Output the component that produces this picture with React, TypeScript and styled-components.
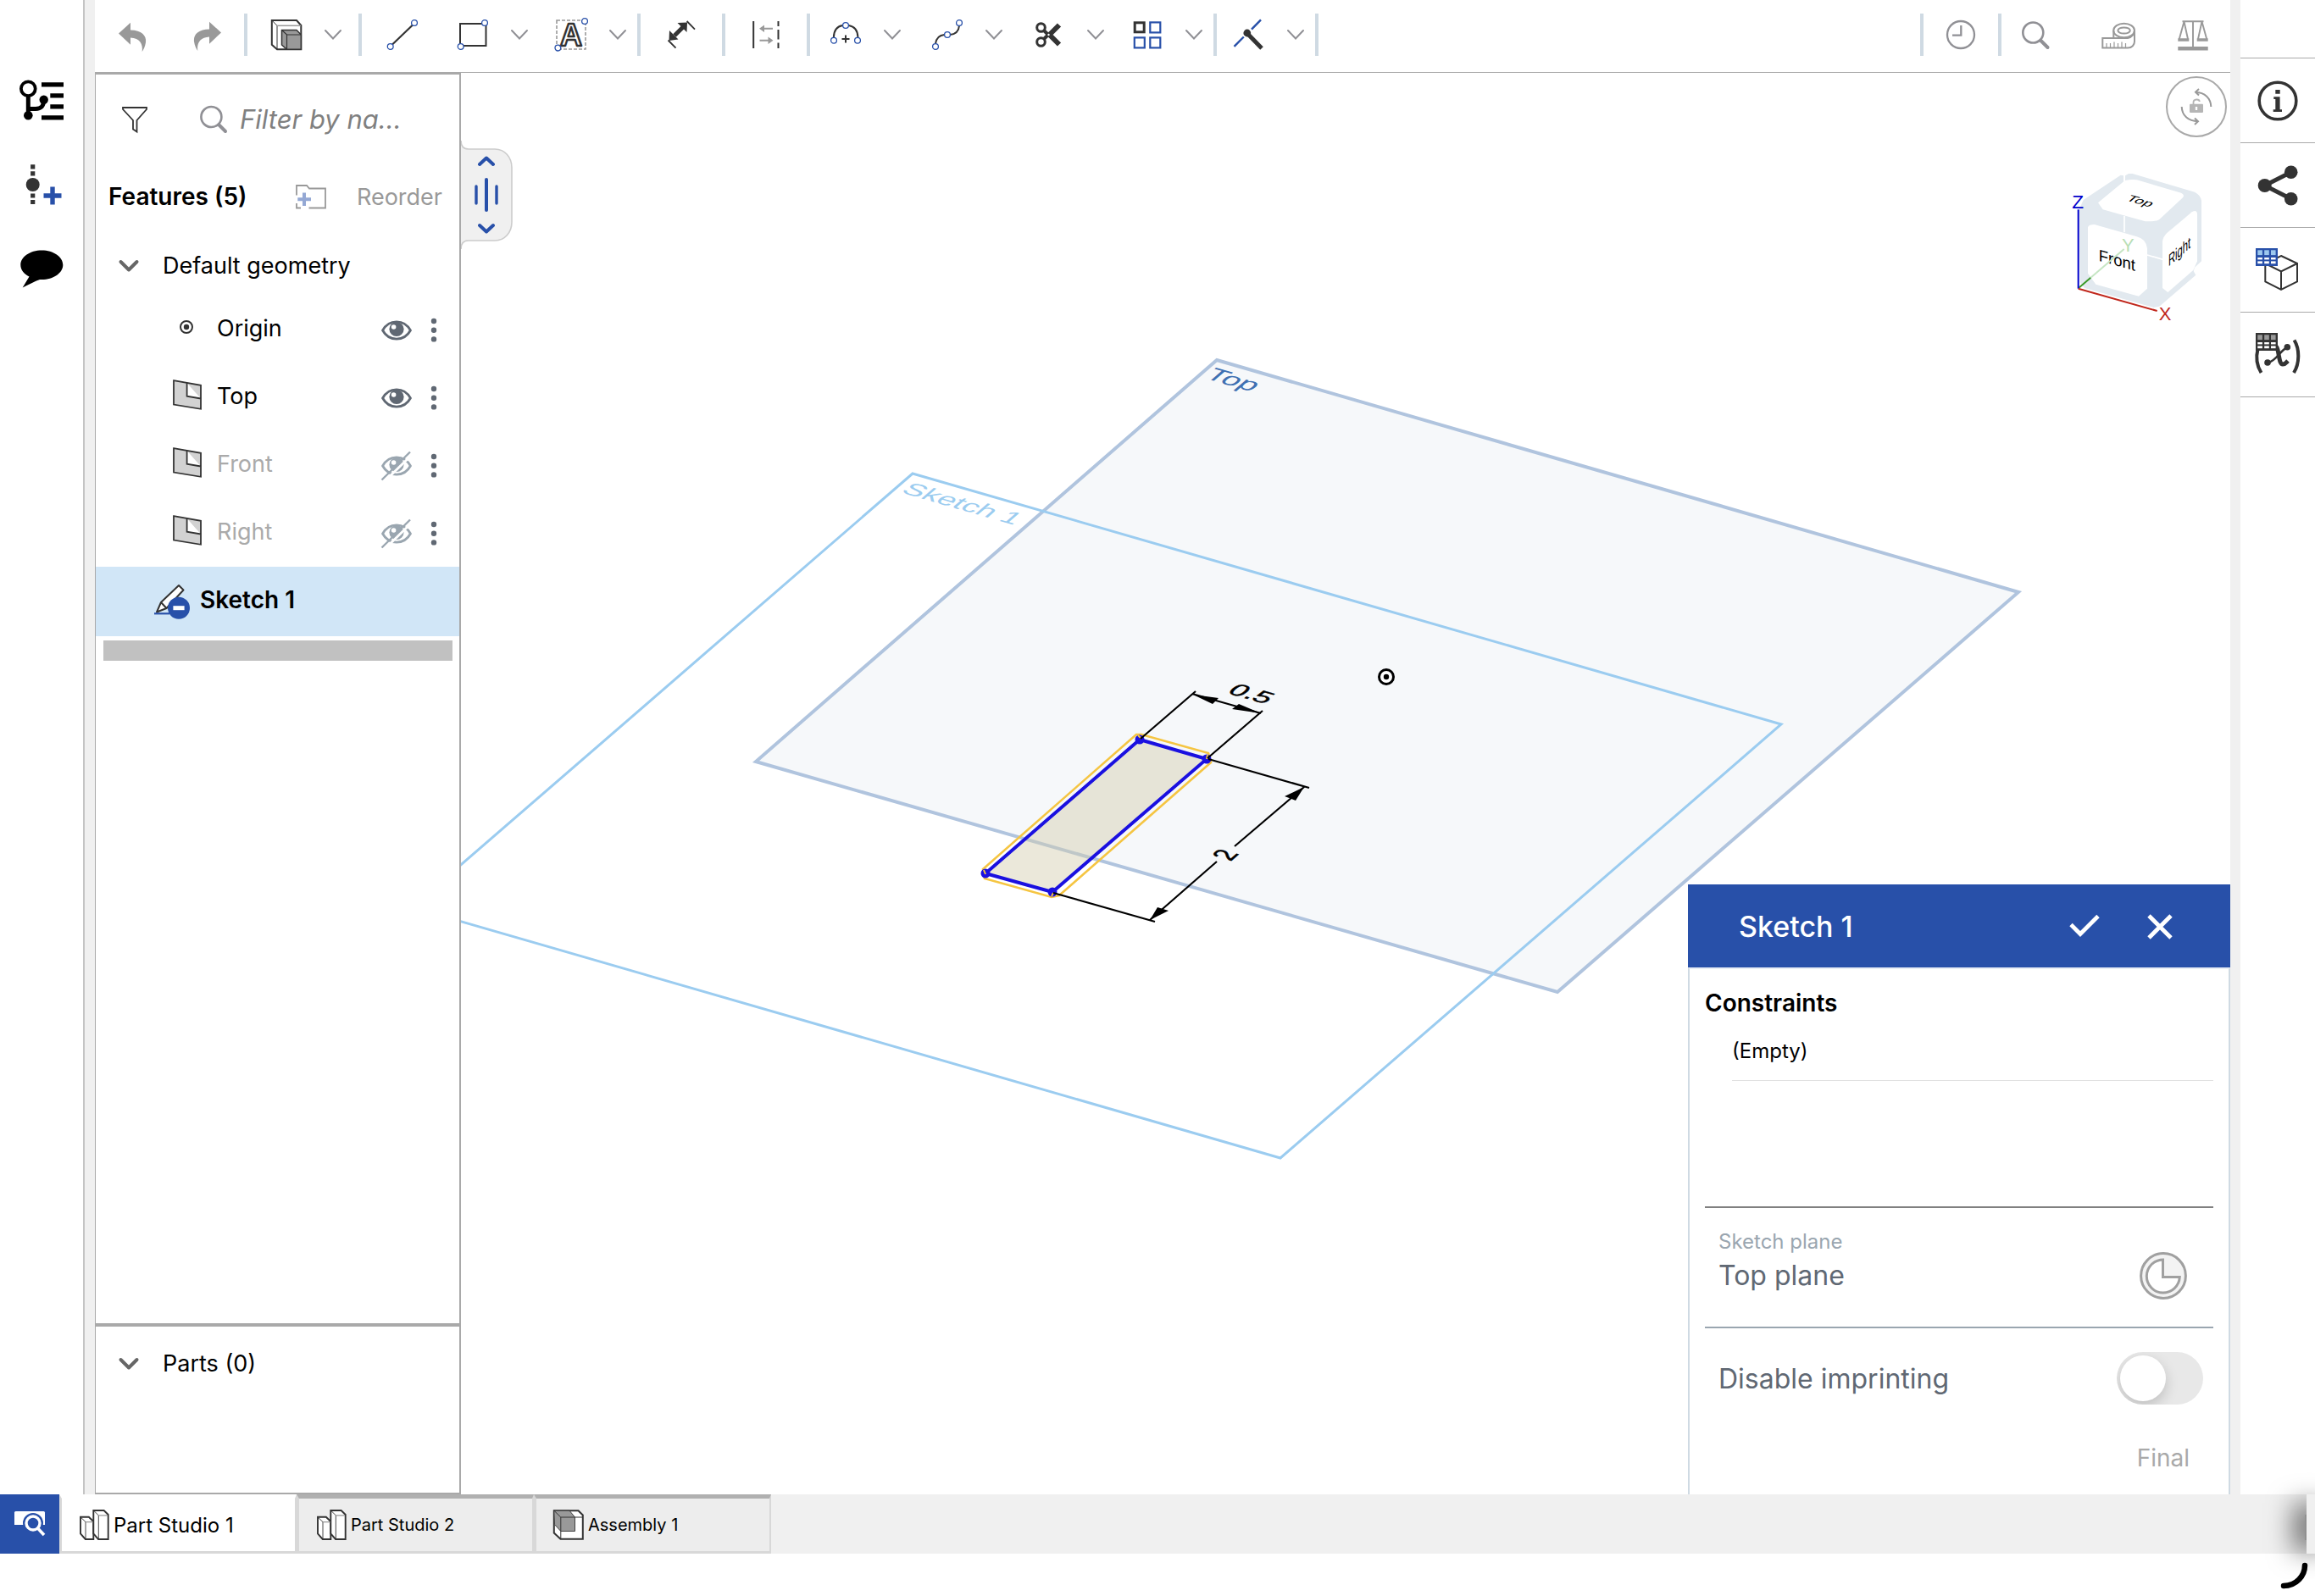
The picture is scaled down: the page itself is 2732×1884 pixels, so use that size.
import React from "react";
import styled, { createGlobalStyle } from "styled-components";

const ink = "#333333";
const blue = "#2850a9";
const grey = "#999999";
const slate = "#606873";
const line = "#a9a9a9";
const mist = "#cfdae3";
const gutter = "#f0f0f0";
const sans = `Inter, "Liberation Sans", sans-serif`;

const GlobalStyle = createGlobalStyle`
  *, *::before, *::after { box-sizing: border-box; }
  body { margin: 0; background: #fff; color: #000; font-family: ${sans}; }
  button, input { font: inherit; color: inherit; }
  svg { display: block; flex: none; overflow: visible; }
`;

/* ---------- page frame ---------- */

const Page = styled.div`
  display: flex;
  flex-direction: column;
  height: 100vh;
  min-height: 1200px;
  padding-bottom: 50px;
  position: relative;
  overflow: hidden;
`;

const Workspace = styled.div`
  display: flex;
  flex: 1;
  min-height: 0;
`;

const Studio = styled.main`
  display: flex;
  flex-direction: column;
  flex: 1;
  min-width: 0;
`;

const StudioBody = styled.div`
  display: flex;
  flex: 1;
  min-height: 0;
`;

const Gutter = styled.div`
  flex: none;
  width: 12px;
  background: ${gutter};
`;

const PlainButton = styled.button`
  display: flex;
  align-items: center;
  justify-content: center;
  flex: none;
  margin: 0;
  padding: 0;
  border: 0;
  background: none;
`;

/* ---------- side rails ---------- */

const LeftRail = styled.nav`
  display: flex;
  flex-direction: column;
  flex: none;
  width: 100px;
  padding-top: 68px;
  border-right: 2px solid #c4c4c4;
`;

const LeftRailButton = styled(PlainButton)`
  height: 100px;
`;

const RightRail = styled.nav`
  display: flex;
  flex-direction: column;
  flex: none;
  width: 88px;
  padding-top: 68px;
`;

const RightRailButton = styled(PlainButton)`
  height: 100px;
  border-top: 1px solid ${line};

  &:last-child {
    height: 101px;
    border-bottom: 1px solid ${line};
  }
`;

/* ---------- toolbar ---------- */

const Toolbar = styled.header`
  display: flex;
  align-items: center;
  flex: none;
  height: 86px;
  padding-bottom: 3px;
  border-bottom: 1px solid ${line};
`;

const ToolGroup = styled.div<{ $start: number; $end: number; $gap?: number }>`
  display: flex;
  align-items: center;
  gap: ${(p) => p.$gap ?? 0}px;
  padding-left: ${(p) => p.$start}px;
  padding-right: ${(p) => p.$end}px;
`;

const ToolPair = styled.div`
  display: flex;
  gap: 15px;
`;

const ToolButton = styled(PlainButton)`
  width: 40px;
  height: 40px;
`;

const Separator = styled.span`
  flex: none;
  width: 4px;
  height: 50px;
  background: ${mist};
`;

const Spacer = styled.span`
  flex: 1;
`;

/* ---------- feature panel ---------- */

const Panel = styled.aside`
  display: flex;
  flex-direction: column;
  flex: none;
  width: 432px;
  border: solid ${line};
  border-width: 2px 2px 2px 1px;
`;

const FilterRow = styled.div`
  display: flex;
  align-items: center;
  height: 106px;
  padding-left: 31px;
`;

const SearchBox = styled.label`
  display: flex;
  align-items: center;
  flex: 1;
  gap: 13px;
  min-width: 0;
  margin-left: 62px;
`;

const SearchInput = styled.input`
  flex: 1;
  min-width: 0;
  padding: 0;
  border: 0;
  outline: 0;
  background: none;
  font-size: 31px;
  font-style: italic;
  line-height: 40px;

  &::placeholder {
    color: #808080;
    opacity: 1;
  }
`;

const FeatureHeader = styled.div`
  display: flex;
  align-items: center;
  height: 76px;
  padding: 0 20px 0 15px;
`;

const FeatureTitle = styled.h2`
  flex: 1;
  margin: 0;
  font-size: 28px;
  font-weight: 600;
`;

const ReorderButton = styled(PlainButton)`
  margin-left: 36px;
  color: ${grey};
  font-size: 27px;
`;

const GroupToggle = styled(PlainButton)`
  justify-content: flex-start;
  gap: 28px;
  width: 100%;
  height: 79px;
  padding: 8px 0 0 27px;
  font-size: 27px;
`;

const List = styled.ul`
  margin: 0;
  padding: 0;
  list-style: none;
`;

const FeatureRow = styled.li<{ $dim?: boolean }>`
  display: flex;
  align-items: center;
  height: 80px;
  padding: 0 20px 4px 89px;
  color: ${(p) => (p.$dim ? "#aaaaaa" : "#000")};
  font-size: 27px;
`;

const FeatureName = styled.span`
  flex: 1;
  margin-left: 18px;
`;

const MenuButton = styled(PlainButton)`
  width: 20px;
  margin-left: 16px;
`;

const SketchRow = styled.div`
  display: flex;
  align-items: center;
  gap: 12px;
  height: 82px;
  padding: 0 20px 4px 69px;
  background: #d1e6f7;
  font-size: 28px;
  font-weight: 600;
`;

const RollbackBar = styled.div`
  height: 24px;
  margin: 5px 8px 0 9px;
  background: #c1c1c1;
`;

const FeatureTree = styled.section`
  flex: 1;
  min-height: 0;
`;

const PartsSection = styled.section`
  flex: none;
  height: 200px;
  border-top: 4px solid ${line};
`;

/* ---------- canvas ---------- */

const Canvas = styled.section`
  position: relative;
  flex: 1;
  min-width: 0;
  overflow: hidden;
`;

const Scene = styled.svg`
  width: 100%;
  height: 100%;
`;

const PanelHandle = styled(PlainButton)`
  position: absolute;
  left: 0;
  top: 80px;
`;

const RotateLock = styled(PlainButton)`
  position: absolute;
  right: 4px;
  top: 4px;
`;

const CubeOverlay = styled.div`
  position: absolute;
  right: 28px;
  top: 114px;
`;

/* ---------- sketch dialog ---------- */

const Dialog = styled.form`
  position: absolute;
  right: 0;
  bottom: 0;
  width: 640px;
  height: 720px;
  background: #fff;
`;

const DialogHeader = styled.div`
  display: flex;
  align-items: center;
  height: 98px;
  padding: 0 68px 0 60px;
  background: ${blue};
  color: #fff;
`;

const DialogTitle = styled.h2`
  flex: 1;
  margin: 0;
  font-size: 34px;
  font-weight: 500;
`;

const DialogAction = styled(PlainButton)`
  margin-left: 56px;
`;

const DialogBody = styled.div`
  height: 622px;
  padding: 0 18px;
  border: solid ${mist};
  border-width: 2px 2px 0;
  border-top-color: #e8edf5;
`;

const Constraints = styled.section`
  height: 282px;
  border-bottom: 2px solid #808080;
`;

const ConstraintsTitle = styled.h3`
  margin: 0;
  padding-top: 8px;
  font-size: 28px;
  font-weight: 600;
  line-height: 64px;
`;

const ConstraintRow = styled.div`
  height: 60px;
  margin-left: 32px;
  border-bottom: 1px solid #e0e0e0;
  font-size: 24px;
  line-height: 50px;
`;

const PlaneField = styled.div`
  display: flex;
  align-items: center;
  justify-content: space-between;
  height: 142px;
  padding: 20px 31px 0 16px;
  border-bottom: 2px solid #9aa6b0;
`;

const FieldText = styled.div`
  align-self: flex-start;
  line-height: 40px;
`;

const FieldLabel = styled.div`
  color: #9aa6b0;
  font-size: 24px;
`;

const FieldValue = styled.div`
  color: ${slate};
  font-size: 32px;
`;

const SwitchRow = styled.label`
  display: flex;
  align-items: center;
  justify-content: space-between;
  height: 118px;
  padding: 0 12px 0 16px;
  color: ${slate};
  font-size: 32px;
`;

const Switch = styled.input`
  appearance: none;
  position: relative;
  width: 102px;
  height: 62px;
  margin: 0;
  overflow: hidden;
  border-radius: 31px;
  background: #e8e8e8;

  &::before {
    content: "";
    position: absolute;
    left: 4px;
    top: 4px;
    width: 54px;
    height: 54px;
    border-radius: 50%;
    background: #fff;
    box-shadow: 0 6px 16px rgba(0, 0, 0, 0.18);
  }
`;

const DialogFooter = styled.div`
  display: flex;
  justify-content: flex-end;
  height: 70px;
  padding-right: 28px;
  color: ${line};
  font-size: 28px;
`;

/* ---------- tab bar ---------- */

const TabBar = styled.footer`
  display: flex;
  flex: none;
  position: relative;
  height: 70px;
  background: ${gutter};
`;

const TabManager = styled(PlainButton)`
  width: 70px;
  background: ${blue};
`;

const Tab = styled.button<{ $active?: boolean }>`
  display: flex;
  align-items: center;
  flex: none;
  gap: 4px;
  width: 280px;
  margin: 0;
  padding: 0 0 0 21px;
  border: solid #d8d8d8;
  border-width: 5px 2px 3px 3px;
  border-top-color: ${(p) => (p.$active ? "#fff" : "#b0b0b0")};
  background: ${(p) => (p.$active ? "#fff" : "#ededed")};
  font-size: ${(p) => (p.$active ? 24 : 20)}px;
`;

const EdgeShade = styled.span`
  position: absolute;
  right: 0;
  top: -30px;
  bottom: -30px;
  width: 90px;
  overflow: hidden;
  pointer-events: none;

  &::before {
    content: "";
    position: absolute;
    left: 78px;
    top: 54px;
    bottom: 46px;
    width: 10px;
    background: rgba(0, 0, 0, 0.4);
    box-shadow: 0 0 30px 14px rgba(0, 0, 0, 0.5);
  }

  &::after {
    content: "";
    position: absolute;
    right: 0;
    top: 30px;
    bottom: 30px;
    width: 10px;
    background: ${gutter};
  }
`;

const CornerMark = styled.svg`
  position: absolute;
  right: 8px;
  bottom: 8px;
`;

/* ---------- drawings ---------- */

const Chevron = () => (
  <svg width="22" height="14" viewBox="0 0 22 14" fill="none" stroke="#909095" strokeWidth="2" strokeLinecap="round">
    <path d="M2 2 L11 11.5 L20 2" />
  </svg>
);

const BoldChevron = () => (
  <svg width="24" height="16" viewBox="0 0 24 16" fill="none" stroke="#666" strokeWidth="4" strokeLinecap="round" strokeLinejoin="round">
    <path d="M2.5 3 L12 12.5 L21.5 3" />
  </svg>
);

const Icon = ({ size = 40, children }: { size?: number; children: React.ReactNode }) => (
  <svg width={size} height={size} viewBox={`0 0 ${size} ${size}`} fill="none" stroke={ink} strokeWidth="2">
    {children}
  </svg>
);

const Node = ({ x, y }: { x: number; y: number }) => (
  <circle cx={x} cy={y} r="3.4" fill="#fff" stroke={blue} strokeWidth="1.3" />
);

const undoPath = "M4 18.5 L18 5.7 V14.5 C31 14.5 37 21 36 29 C35.4 34 33 38 31.7 40 C33 31 29 24 18 23.5 V31.7 Z";

const icons = {
  undo: <Icon><path d={undoPath} fill={grey} stroke="none" /></Icon>,
  redo: <Icon><path d={undoPath} fill={grey} stroke="none" transform="translate(40 -1) scale(-1 1)" /></Icon>,
  extrude: (
    <Icon>
      <path d="M2.8 3 H32 L37.3 9 V37.3 H9 L2.8 31.7 Z" />
      <path d="M2.8 3 L9 9.3 V37.3" strokeWidth="1" />
      <path d="M9 9.3 H37" stroke={grey} strokeWidth="1.5" />
      <path d="M14.5 14.5 H32 L37.3 20 V37.3 H20.5 L14.5 32 Z" fill={grey} strokeWidth="1.5" />
      <path d="M14.5 14.5 L20.5 20 H37 M20.5 20 V37" strokeWidth="1.2" />
    </Icon>
  ),
  line: <Icon><path d="M8 31.5 L32 8.5" strokeWidth="2.2" /><Node x={5.7} y={34} /><Node x={34} y={6} /></Icon>,
  rect: <Icon><rect x="5" y="7" width="30.5" height="26" /><Node x={5.7} y={34} /><Node x={34} y={6} /></Icon>,
  text: (
    <Icon>
      <rect x="3" y="3" width="34" height="34" stroke={grey} strokeWidth="1.6" strokeDasharray="4 2" />
      <text x="20" y="33" textAnchor="middle" fontFamily="Liberation Sans" fontWeight="700" fontSize="36" fill="#fff" strokeWidth="2.4" strokeLinejoin="round">A</text>
      <Node x={36} y={4} /><Node x={4.4} y={35.6} />
    </Icon>
  ),
  dimension: (
    <Icon>
      <path d="M12 21 L22 11" strokeWidth="5" />
      <path d="M5.5 27 L6 15 L16.5 25.5 Z M27 5.5 L15.5 6 L26.5 17 Z" fill={ink} stroke="none" />
      <path d="M26.6 4 L36 13.7 M4.5 26.5 L13.5 35.7" strokeWidth="1.8" />
    </Icon>
  ),
  constraint: (
    <Icon>
      <path d="M5.2 4 V36" />
      <path d="M34.5 4 V10 M34.5 14 V25.5 M34.5 29.5 V36" />
      <path d="M28 12.7 H16 M12.5 26.7 H24" stroke={grey} />
      <path d="M12 12.7 L18 8.5 V17 Z M28.5 26.7 L22.5 22.5 V31 Z" fill={grey} stroke="none" />
    </Icon>
  ),
  arc: (
    <Icon>
      <path d="M5.8 23.5 C6 15 10 10 16.5 9 M23.5 9 C30 10 34.3 15 34.5 23.5" />
      <path d="M20 20.5 V29.5 M15.5 25 H24.5" />
      <Node x={6} y={26.7} /><Node x={34} y={26.7} /><Node x={20} y={9} />
    </Icon>
  ),
  spline: (
    <Icon>
      <path d="M6 30.5 C7 24 11 20.5 16.5 20 M23 20 C30 19.5 33.5 15 34 9.5" />
      <Node x={6} y={34} /><Node x={20} y={20} /><Node x={34} y={6} />
    </Icon>
  ),
  scissors: (
    <Icon>
      <path d="M18.5 22 L32 8.5 M18.5 18 L32 31.5" strokeWidth="6" />
      <circle cx="10.5" cy="11.5" r="4.8" strokeWidth="3" />
      <circle cx="10.5" cy="28.5" r="4.8" strokeWidth="3" />
      <path d="M14 15 L19 20 L14 25" strokeWidth="4" />
      <circle cx="19.5" cy="20" r="1.2" fill="#fff" stroke="none" />
    </Icon>
  ),
  grid: (
    <Icon>
      <rect x="5.2" y="5.8" width="11" height="11" strokeWidth="3" />
      <g stroke={blue} strokeWidth="2.2">
        <rect x="23.3" y="5.4" width="12" height="12" />
        <rect x="4.8" y="23.4" width="12" height="12" />
        <rect x="23.3" y="23.4" width="12" height="12" />
      </g>
    </Icon>
  ),
  trim: (
    <Icon>
      <path d="M34 2.3 L23 13.7 M13.8 22.5 L2.5 33.8" stroke={blue} strokeWidth="2.4" />
      <path d="M19 19.5 L35 36" strokeWidth="5" />
      <circle cx="17.8" cy="18" r="4.4" fill={ink} stroke="none" />
    </Icon>
  ),
  clock: (
    <Icon>
      <g stroke="#909095" strokeWidth="2.3">
        <circle cx="20" cy="20" r="16" />
        <path d="M20.3 9 V20.7 H10" />
      </g>
    </Icon>
  ),
  search: (
    <Icon>
      <circle cx="17.3" cy="17.5" r="12" stroke="#909095" strokeWidth="2.6" />
      <path d="M26.5 27 L34.5 35" stroke="#909095" strokeWidth="4" strokeLinecap="round" />
    </Icon>
  ),
  tape: (
    <Icon>
      <g stroke={grey}>
        <path d="M1.3 24 H31 C36 23 39 19 39 15 V28 C39 32 36 35.5 31 35.5 H1.3 Z M14.3 24 V15" />
        <ellipse cx="26.6" cy="15" rx="12.4" ry="8.3" />
        <ellipse cx="26.6" cy="15" rx="7.2" ry="3.6" />
        <path d="M6 35 V30 M10.5 35 V30 M15 35 V28.5 M19.5 35 V30 M24 35 V28.5 M28.5 35 V30" strokeWidth="1.2" />
      </g>
    </Icon>
  ),
  balance: (
    <Icon>
      <g stroke={grey} strokeWidth="1.9">
        <path d="M7.5 4.3 H32.5 M20 4 V34 M9.5 4.5 L3.8 25 M9.5 4.5 L14 25 M30.5 4.5 L26 25 M30.5 4.5 L36.2 25" />
        <path d="M2.3 26 H15.3 M24.7 26 H37.7" strokeWidth="3.6" />
        <path d="M2.3 36.2 H37.7" strokeWidth="4.4" />
      </g>
    </Icon>
  ),
};

const TreeIcon = () => (
  <Icon size={56}>
    <g stroke="#000" strokeWidth="5">
      <circle cx="12.3" cy="14.7" r="8.4" strokeWidth="3.8" />
      <path d="M12.3 24 V46 M12.3 38.5 H21 C28 38.5 30.5 35 30.7 28" />
      <path d="M28 9.8 H54 M38.3 22.8 H54 M38.3 35.8 H54 M28 48.8 H54" strokeWidth="5.2" />
    </g>
    <g fill="#000" stroke="none"><circle cx="12.3" cy="46.3" r="5.3" /><circle cx="30.7" cy="27.7" r="5.2" /></g>
  </Icon>
);

const InsertIcon = () => (
  <Icon size={56}>
    <path d="M17.7 4.3 V9.6 M17.7 12.3 V17.4 M17.7 38.4 V43.4 M17.7 46 V51" strokeWidth="5.2" />
    <circle cx="17.7" cy="28" r="8" fill={ink} stroke="none" />
    <path d="M41 30.5 V51.5 M30.5 41 H51.5" stroke={blue} strokeWidth="5.4" />
  </Icon>
);

const CommentIcon = () => (
  <Icon size={56}>
    <path d="M28.3 5.4 C42 5.4 53.3 13 53.3 22.7 C53.3 32 42 40 28.3 40 H26 C20 42 13 46 5.7 49.5 L13.5 36.5 C7 33 3.3 28.5 3.3 22.7 C3.3 13 14.5 5.4 28.3 5.4 Z" fill="#000" stroke="none" />
  </Icon>
);

const InfoIcon = () => (
  <Icon size={56}>
    <circle cx="28" cy="28" r="21.8" strokeWidth="3.6" />
    <path d="M25.3 15 H30.7 V19.8 H25.3 Z M23.3 23.3 H30.6 V38.3 H33 V41 H22.7 V38.3 H25.3 V26 H23.3 Z" fill={ink} stroke="none" />
  </Icon>
);

const ShareIcon = () => (
  <Icon size={56}>
    <path d="M43.7 12.3 L12.7 28 L43.7 43.7" strokeWidth="5" />
    <g fill={ink} stroke="none"><circle cx="12.7" cy="28" r="8" /><circle cx="43.7" cy="12.3" r="7.8" /><circle cx="43.7" cy="43.7" r="7.8" /></g>
  </Icon>
);

const MiniTable = ({ frame, head }: { frame: string; head: string }) => (
  <g stroke="none">
    <rect x="2" y="2" width="26" height="21" fill={frame} />
    {[4.3, 12.2, 20].map((x) => (
      <g key={x}>
        <rect x={x} y="4.3" width="5.6" height="5.8" fill={head} />
        <rect x={x} y="13" width="5.6" height="2.4" fill="#fff" />
        <rect x={x} y="17.4" width="5.6" height="2.8" fill="#fff" />
      </g>
    ))}
  </g>
);

const TableCubeIcon = () => (
  <Icon size={56}>
    <path d="M32 11 L51 20 V41.5 L32 51 L13.3 41.5 V20 Z M13.3 20 L32 29.5 L51 20 M32 29.5 V51" />
    <MiniTable frame={blue} head="#9cc8ee" />
  </Icon>
);

/* The variable's x is a calligraphic mark: a thick stem, a thin cross stroke and two round ends. */
const VariableIcon = () => (
  <Icon size={56}>
    <path d="M4.5 21 C2 31 3.5 41 8.5 49 M47.5 10.5 C54 21 54 38 47 49" strokeWidth="4" />
    <path d="M23 17 C28 17 28 22 29 27 C30.5 35 31 39 34 39 C37 39 38 37 40 35" strokeWidth="5" />
    <path d="M38 20 C32 22 26 35 17 37" strokeWidth="2.6" />
    <circle cx="39.3" cy="18.8" r="3.8" fill={ink} stroke="none" />
    <circle cx="16" cy="37" r="3.8" fill={ink} stroke="none" />
    <MiniTable frame={ink} head={grey} />
  </Icon>
);

const FunnelIcon = () => (
  <svg width="30" height="32" viewBox="0 0 30 32" fill="none" stroke={ink} strokeWidth="1.8">
    <path d="M1 2 H29 V4 L17.5 17 V30.5 L13 27.5 V17 L1 4 Z" />
  </svg>
);

const PanelSearchIcon = () => (
  <svg width="34" height="36" viewBox="0 0 34 36" fill="none" stroke="#909095">
    <circle cx="13.4" cy="15" r="12" strokeWidth="2.6" />
    <path d="M22.5 24.5 L30 32" strokeWidth="4" strokeLinecap="round" />
  </svg>
);

const FolderIcon = () => (
  <svg width="36" height="32" viewBox="0 0 36 32" fill="none" stroke={grey} strokeWidth="1.8">
    <path d="M1 14.5 V3 H13 L16 6.5 H35 V29.5 H15.5 M1 24 V29.5 H6" />
    <path d="M10 11.5 V27 M2.3 19.3 H18" stroke="#94a8d4" strokeWidth="4" />
  </svg>
);

const OriginIcon = () => (
  <Icon size={36}>
    <circle cx="18" cy="17" r="7" />
    <circle cx="18" cy="17" r="3.2" fill={ink} stroke="none" />
  </Icon>
);

const PlaneIcon = () => (
  <Icon size={36}>
    <path d="M3 0.2 L35 5.8 V33.8 L3 28.6 Z M18.6 3 V18.7 L35 21.5" fill="#d2d2d2" strokeWidth="1.8" />
  </Icon>
);

const EyeIcon = ({ hidden }: { hidden?: boolean }) => {
  const color = hidden ? "#9aa6b0" : slate;
  return (
    <svg width="36" height="44" viewBox="0 0 36 44" fill="none" stroke={color} strokeWidth="2.8">
      <path d="M1.6 25 C9 11.5 27 11.5 34.4 25 C27 38.5 9 38.5 1.6 25 Z" />
      <circle cx="18" cy="23.5" r="8.6" fill={color} stroke="none" />
      <circle cx="14.6" cy="21" r="2.8" fill="#fff" stroke="none" />
      {hidden && <path d="M3 44 L37 11" stroke="#fff" strokeWidth="3" />}
      {hidden && <path d="M0.5 41.5 L34 8.5" strokeWidth="2.4" />}
    </svg>
  );
};

const DotsIcon = () => (
  <svg width="8" height="32" viewBox="0 0 8 32" fill={slate}>
    <circle cx="4" cy="8" r="3.2" /><circle cx="4" cy="18.7" r="3.2" /><circle cx="4" cy="29.4" r="3.2" />
  </svg>
);

const SketchIcon = () => (
  <svg width="42" height="48" viewBox="0 0 42 48" fill="none" stroke={ink} strokeWidth="2">
    <path d="M3 38.5 L8 27 L29 7 L34.5 12.5 L14.5 34 Z M8 27 L14.5 34" fill="#fff" strokeLinejoin="round" />
    <path d="M0 40.3 H18" stroke={blue} strokeWidth="2.2" />
    <circle cx="29" cy="33.8" r="13" fill={blue} stroke="none" />
    <rect x="22.4" y="31.2" width="13.2" height="5" fill="#fff" stroke="none" />
  </svg>
);

const PartStudioIcon = () => (
  <svg width="36" height="36" viewBox="0 0 36 36" fill="#fff" stroke={ink} strokeWidth="1.9">
    <path d="M1 8.8 H10.8 L16.3 14 V35 H6.8 L1 28.5 Z" />
    <path d="M16.3 1 H28.6 L33.7 6 V35 H22 L16.3 28.5 Z" />
    <path d="M1 8.8 L7 14.6 V34.5 M16.3 1 L22.3 6.8 V34.5" strokeWidth="0.9" fill="none" />
    <path d="M7 14.6 H15.6 M22.3 6.8 H33" stroke={grey} strokeWidth="1.2" />
  </svg>
);

const AssemblyIcon = () => (
  <svg width="36" height="36" viewBox="0 0 36 36" fill="#fff" stroke={ink} strokeWidth="2">
    <path d="M-0.2 1.2 H28.5 L33.8 6.5 V34.8 H7.5 L-0.2 27.5 Z" />
    <path d="M-0.2 1.2 H18 L24.5 9 V25.5 H7.8 L0.4 17.5 Z" fill={grey} strokeWidth="0.9" />
    <path d="M-0.2 1.2 L7.8 9 H24.5 M7.8 9 V34.5 M24.5 9 H33" fill="none" strokeWidth="1" />
  </svg>
);

const TabManagerIcon = () => (
  <svg width="36" height="32" viewBox="0 0 36 32" fill="none">
    <path d="M1.5 1 H34.5 Q36 1 36 2.5 V17 H0 V2.5 Q0 1 1.5 1 Z" fill="#fff" />
    <circle cx="22" cy="15" r="10.5" fill={blue} stroke={blue} strokeWidth="3" />
    <circle cx="22" cy="15" r="8" stroke="#fff" strokeWidth="3.4" />
    <path d="M28 21.5 L35 29" stroke="#fff" strokeWidth="3.6" />
  </svg>
);

const HandleIcon = () => (
  <svg width="62" height="128" viewBox="0 0 62 128" fill="none">
    <path d="M0 0 C0 6 3 10 9 10 H40 C52 10 60 20 60 32 V96 C60 108 52 118 40 118 H9 C3 118 0 122 0 128" fill={gutter} stroke="#cccccc" strokeWidth="1.6" />
    <g stroke={blue} strokeWidth="4" strokeLinecap="round">
      <path d="M22 28 L30 20.5 L38 28 M22 100 L30 107.5 L38 100" strokeLinejoin="round" />
      <path d="M30 46 V82" /><path d="M18 54 V74 M42 54 V74" strokeWidth="3.4" />
    </g>
  </svg>
);

const RotateLockIcon = () => (
  <svg width="72" height="72" viewBox="0 0 72 72" fill="none" stroke={grey} strokeWidth="2">
    <circle cx="36" cy="36" r="35" fill="#fff" stroke={line} />
    <path d="M53.3 36 C53 26 46 19 35 18.7 M39 15 L35 18.7 L39 22.5 M18.7 36 C19 46 26 53 38 53.3 M34 49.5 L38 53.3 L34 57" />
    <rect x="28" y="32.7" width="16" height="10.3" rx="1" fill="#b5b5b5" stroke="none" />
    <path d="M32.5 33 V31 C32.5 26.5 39.5 26.5 39.8 30" stroke="#b5b5b5" strokeWidth="1.8" />
    <path d="M36 36 V40" stroke="#fff" strokeWidth="2.4" />
  </svg>
);

const PlaneBadge = () => (
  <svg width="56" height="56" viewBox="0 0 56 56" stroke="#a0a0a0" strokeWidth="3">
    <circle cx="28" cy="28" r="26.4" fill="#f3f3f3" />
    <path d="M27.5 9 V29.5 H47.3 A19.5 19.5 0 1 1 27.5 9 Z" fill="#fff" />
  </svg>
);

/* Edge lengths follow the isometric camera; labels on each face share its axes. */
const ViewCube = () => (
  <svg width="164" height="187" viewBox="660 600 492 561" fontFamily="Liberation Sans" aria-label="View cube">
    <path d="M700 745 L716 708 L848 620 L858 622 V645 H864 V622 L876 615 L890 615 L1110 680 Q1130 690 1134 710 V925 L1110 947 L1106 960 L1114 974 L985 1085 L965 1089 L720 1020 L704 1000 Z" fill="#e2e9ef" />
    <path d="M768 718 L856 645 Q866 634 905 637 L1062 683 Q1076 690 1068 700 L985 777 Q975 785 935 784 L785 742 Z" fill="#fff" />
    <path d="M732 805 Q735 795 755 795 L905 838 Q938 846 942 880 V1022 L912 1049 L760 1007 L732 968 Z" fill="#fff" />
    <path d="M996 855 Q998 838 1012 825 L1100 751 Q1117 742 1119 755 V925 L1105 957 L1015 1035 L996 1020 Z" fill="#fff" />
    <path d="M861 765 V823 M942 903 L998 919" stroke="#fff" strokeWidth="5" />
    <text transform="matrix(0.96 0.27 -0.55 0.48 864 709)" fontSize="56">Top</text>
    <text transform="matrix(0.96 0.27 0 1 770 923)" fontSize="58">Front</text>
    <text transform="matrix(0.58 -0.5 0 1 1017 944)" fontSize="58">Right</text>
    <path d="M700 1019 L742 983" stroke="#3a9a28" strokeWidth="6" />
    <path d="M742 983 L860 882" stroke="#c6e6c4" strokeWidth="6" />
    <path d="M698 742 V1022" stroke="#0000cc" strokeWidth="6" />
    <path d="M698 1022 L977 1101" stroke="#c0271c" strokeWidth="6" />
    <text x="676" y="738" fontSize="68" fill="#0000cc">Z</text>
    <text x="983" y="1133" fontSize="66" fill="#c0271c">X</text>
    <text x="852" y="890" fontSize="66" fill="#b9deb5">Y</text>
  </svg>
);

const SketchScene = () => (
  <Scene viewBox="544 86 2088 1678" preserveAspectRatio="xMidYMid meet" fontFamily="Liberation Sans">
    <path d="M1436 425 L2382 699 L1838 1171 L892 899 Z" fill="#f6f8fa" stroke="#b0c4de" strokeWidth="4" />
    <text transform="matrix(0.96 0.278 -0.555 0.479 1420 446)" fontSize="37" fill="#3f70b2">Top</text>
    <path d="M1077 559 L2102 855 L1511 1367 L486 1071 Z" fill="none" stroke="#9bccf0" strokeWidth="3" />
    <text transform="matrix(0.96 0.278 -0.555 0.479 1062 581)" fontSize="36" fill="#9bccf0">Sketch 1</text>

    <path d="M1341 867 L1347 867 L1426 889 L1429 900 L1250 1057 L1241 1059 L1162 1037 L1160 1026 Z" fill="none" stroke="#f5c542" strokeWidth="2.6" />
    <path d="M1345 873 L1424 896 L1242 1053 L1163 1031 Z" fill="rgba(211,204,173,0.45)" stroke="#1a10e0" strokeWidth="4" />
    <g fill="#1a10e0">
      <circle cx="1345" cy="873" r="5.5" /><circle cx="1424" cy="896" r="5.5" />
      <circle cx="1242" cy="1053" r="5.5" /><circle cx="1163" cy="1031" r="5.5" />
    </g>
    <g stroke="#f5c542" strokeWidth="2">
      <path d="M1343 868 L1346 871 M1425 891 L1424 896 M1241 1058 L1243 1054 M1161 1027 L1163 1032" />
    </g>

    <g stroke="#000" strokeWidth="2.2">
      <path d="M1346 872 L1411 816 M1425 895 L1490 839 M1407 819 L1488 842" />
      <path d="M1426 896 L1545 930 M1243 1054 L1363 1088 M1539 929 L1457 999 M1436 1017 L1357 1086" />
    </g>
    <path d="M1408 820 L1438 824 L1431 831 Z M1488 842 L1462 831 L1454 837 Z M1539 929 L1516 940 L1529 945 Z M1357 1086 L1366 1071 L1379 1075 Z" />
    <g stroke="#000" strokeWidth="0.6">
      <text transform="matrix(0.963 0.27 -0.555 0.479 1447 818)" fontSize="35">0.5</text>
      <text transform="matrix(0.555 -0.479 0.963 0.27 1452 1017)" fontSize="35">2</text>
    </g>

    <circle cx="1636" cy="799" r="8.5" fill="#fff" stroke="#000" strokeWidth="3" />
    <circle cx="1636" cy="799" r="3.2" />
  </Scene>
);

/* ---------- composition ---------- */

const Tool = ({ name, label, menu }: { name: keyof typeof icons; label: string; menu?: boolean }) => (
  <ToolPair>
    <ToolButton aria-label={label}>{icons[name]}</ToolButton>
    {menu && <ToolButton aria-label={`${label} options`}><Chevron /></ToolButton>}
  </ToolPair>
);

const features = [
  { name: "Origin", icon: <OriginIcon />, hidden: false },
  { name: "Top", icon: <PlaneIcon />, hidden: false },
  { name: "Front", icon: <PlaneIcon />, hidden: true },
  { name: "Right", icon: <PlaneIcon />, hidden: true },
];

export default function App() {
  return (
    <Page>
      <GlobalStyle />
      <Workspace>
        <LeftRail>
          <LeftRailButton aria-label="Feature tree"><TreeIcon /></LeftRailButton>
          <LeftRailButton aria-label="Insert feature"><InsertIcon /></LeftRailButton>
          <LeftRailButton aria-label="Comments"><CommentIcon /></LeftRailButton>
        </LeftRail>
        <Gutter />

        <Studio>
          <Toolbar>
            <ToolGroup $start={24} $end={23} $gap={49}>
              <Tool name="undo" label="Undo" />
              <Tool name="redo" label="Redo" />
            </ToolGroup>
            <Separator />
            <ToolGroup $start={26} $end={10}>
              <Tool name="extrude" label="Extrude" menu />
            </ToolGroup>
            <Separator />
            <ToolGroup $start={28} $end={22}>
              <Tool name="line" label="Line" />
            </ToolGroup>
            <ToolGroup $start={21} $end={3} $gap={21}>
              <Tool name="rect" label="Rectangle" menu />
              <Tool name="text" label="Text" menu />
            </ToolGroup>
            <Separator />
            <ToolGroup $start={28} $end={28}>
              <Tool name="dimension" label="Dimension" />
            </ToolGroup>
            <Separator />
            <ToolGroup $start={28} $end={28}>
              <Tool name="constraint" label="Constraint" />
            </ToolGroup>
            <Separator />
            <ToolGroup $start={22} $end={0} $gap={25}>
              <Tool name="arc" label="Arc" menu />
              <Tool name="spline" label="Spline" menu />
              <Tool name="scissors" label="Trim" menu />
            </ToolGroup>
            <ToolGroup $start={21} $end={3}>
              <Tool name="grid" label="Pattern" menu />
            </ToolGroup>
            <Separator />
            <ToolGroup $start={18} $end={3}>
              <Tool name="trim" label="Construction" menu />
            </ToolGroup>
            <Separator />
            <Spacer />
            <Separator />
            <ToolGroup $start={24} $end={24}>
              <Tool name="clock" label="History" />
            </ToolGroup>
            <Separator />
            <ToolGroup $start={20} $end={10}>
              <Tool name="search" label="Search" />
            </ToolGroup>
            <ToolGroup $start={48} $end={24} $gap={48}>
              <Tool name="tape" label="Measure" />
              <Tool name="balance" label="Mass properties" />
            </ToolGroup>
          </Toolbar>

          <StudioBody>
            <Panel>
              <FilterRow>
                <PlainButton aria-label="Filter"><FunnelIcon /></PlainButton>
                <SearchBox>
                  <PanelSearchIcon />
                  <SearchInput type="text" placeholder="Filter by na..." aria-label="Filter by name" />
                </SearchBox>
              </FilterRow>
              <FeatureHeader>
                <FeatureTitle>Features (5)</FeatureTitle>
                <PlainButton aria-label="Add folder"><FolderIcon /></PlainButton>
                <ReorderButton>Reorder</ReorderButton>
              </FeatureHeader>
              <FeatureTree>
                <GroupToggle><BoldChevron />Default geometry</GroupToggle>
                <List>
                  {features.map((f) => (
                    <FeatureRow key={f.name} $dim={f.hidden}>
                      {f.icon}
                      <FeatureName>{f.name}</FeatureName>
                      <PlainButton aria-label={`Toggle ${f.name}`}><EyeIcon hidden={f.hidden} /></PlainButton>
                      <MenuButton aria-label={`${f.name} menu`}><DotsIcon /></MenuButton>
                    </FeatureRow>
                  ))}
                </List>
                <SketchRow><SketchIcon />Sketch 1</SketchRow>
                <RollbackBar />
              </FeatureTree>
              <PartsSection>
                <GroupToggle><BoldChevron />Parts (0)</GroupToggle>
              </PartsSection>
            </Panel>

            <Canvas>
              <SketchScene />
              <PanelHandle aria-label="Resize panel"><HandleIcon /></PanelHandle>
              <RotateLock aria-label="Lock rotation"><RotateLockIcon /></RotateLock>
              <CubeOverlay><ViewCube /></CubeOverlay>
              <Dialog onSubmit={(e) => e.preventDefault()}>
                <DialogHeader>
                  <DialogTitle>Sketch 1</DialogTitle>
                  <DialogAction type="submit" aria-label="Accept">
                    <svg width="36" height="28" viewBox="0 0 36 28" fill="none" stroke="#fff" strokeWidth="4.8">
                      <path d="M2 12.5 L13 23.5 L34 2.5" />
                    </svg>
                  </DialogAction>
                  <DialogAction type="button" aria-label="Cancel">
                    <svg width="30" height="30" viewBox="0 0 30 30" fill="none" stroke="#fff" strokeWidth="4.8">
                      <path d="M2 3 L28 29 M28 3 L2 29" />
                    </svg>
                  </DialogAction>
                </DialogHeader>
                <DialogBody>
                  <Constraints>
                    <ConstraintsTitle>Constraints</ConstraintsTitle>
                    <ConstraintRow>(Empty)</ConstraintRow>
                  </Constraints>
                  <PlaneField>
                    <FieldText>
                      <FieldLabel>Sketch plane</FieldLabel>
                      <FieldValue>Top plane</FieldValue>
                    </FieldText>
                    <PlaneBadge />
                  </PlaneField>
                  <SwitchRow>
                    Disable imprinting
                    <Switch type="checkbox" />
                  </SwitchRow>
                  <DialogFooter>
                    <PlainButton type="button">Final</PlainButton>
                  </DialogFooter>
                </DialogBody>
              </Dialog>
            </Canvas>
          </StudioBody>
        </Studio>

        <Gutter />
        <RightRail>
          <RightRailButton aria-label="Details"><InfoIcon /></RightRailButton>
          <RightRailButton aria-label="Share"><ShareIcon /></RightRailButton>
          <RightRailButton aria-label="Configurations"><TableCubeIcon /></RightRailButton>
          <RightRailButton aria-label="Variables"><VariableIcon /></RightRailButton>
        </RightRail>
      </Workspace>

      <TabBar>
        <TabManager aria-label="Tab manager"><TabManagerIcon /></TabManager>
        <Tab $active><PartStudioIcon />Part Studio 1</Tab>
        <Tab><PartStudioIcon />Part Studio 2</Tab>
        <Tab><AssemblyIcon />Assembly 1</Tab>
        <EdgeShade />
      </TabBar>

      <CornerMark width="34" height="34" viewBox="0 0 34 34" fill="none" stroke="#000" strokeWidth="6.5" strokeLinecap="round">
        <path d="M30 6 C30 18 20 30 5 30" />
      </CornerMark>
    </Page>
  );
}
